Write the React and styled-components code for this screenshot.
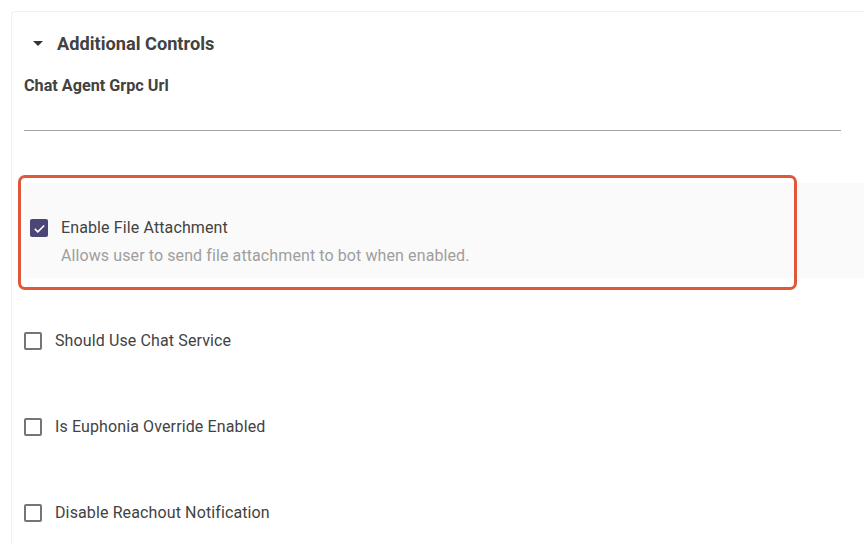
import React from 'react';
import styled, { createGlobalStyle } from 'styled-components';

const GlobalStyle = createGlobalStyle`
  html, body {
    margin: 0;
    padding: 0;
    background: #ffffff;
    overflow: hidden;
  }
  body {
    font-family: Roboto, "Liberation Sans", Arial, sans-serif;
    color: #424242;
  }
`;

const Page = styled.div`
  padding: 11px 0 0 11px;
  width: 940px;
`;

const Card = styled.div`
  border-top: 1px solid #f1f1f1;
  border-left: 1px solid #f1f1f1;
  border-top-left-radius: 4px;
  padding: 0 0 0 12px;
  min-height: 560px;
`;

const Header = styled.div`
  display: flex;
  align-items: center;
  height: 62px;
  padding-left: 2px;
  gap: 7px;
`;

const Caret = styled.svg`
  width: 24px;
  height: 24px;
  fill: #333;
`;

const Title = styled.h2`
  margin: 0;
  font-size: 18.2px;
  font-weight: 700;
  color: #424242;
`;

const FieldLabel = styled.div`
  font-size: 16.2px;
  font-weight: 700;
  color: #424242;
  line-height: 20px;
  margin-top: 2px;
`;

const Underline = styled.div`
  width: 817px;
  height: 26px;
  border-bottom: 1px solid #a3a3a3;
  margin-top: 8px;
`;

const Options = styled.div`
  display: flex;
  flex-direction: column;
  margin-top: 52px;
`;

const HighlightRow = styled.div`
  position: relative;
  background: #fafafa;
  height: 95px;
  box-sizing: border-box;
  padding: 36px 0 0 6px;
  margin-bottom: 20px;
`;

const Annotation = styled.div`
  position: absolute;
  left: -6px;
  top: -8px;
  width: 779px;
  height: 115px;
  box-sizing: border-box;
  border: 3px solid #e0573a;
  border-radius: 7px;
  pointer-events: none;
`;

const Row = styled.label`
  display: flex;
  align-items: center;
  gap: 13px;
  height: ${p => (p.$tall ? '86px' : '18px')};
`;

const Box = styled.span`
  width: 18px;
  height: 18px;
  box-sizing: border-box;
  border-radius: 2px;
  flex: none;
  display: flex;
  align-items: center;
  justify-content: center;
  background: ${p => (p.$checked ? '#4a4675' : 'transparent')};
  border: ${p => (p.$checked ? 'none' : '2px solid #757575')};
`;

const Check = styled.svg`
  width: 15px;
  height: 15px;
  fill: none;
  stroke: #ffffff;
  stroke-width: 2.6;
`;

const LabelText = styled.span`
  font-size: 16px;
  letter-spacing: 0.12px;
  color: #424242;
  line-height: 20px;
`;

const Hint = styled.div`
  font-size: 16px;
  letter-spacing: 0.1px;
  color: #9e9e9e;
  line-height: 20px;
  margin: 9px 0 0 31px;
`;

const Checkbox = ({ checked }) => (
  <Box $checked={checked}>
    {checked && (
      <Check viewBox="0 0 24 24">
        <path d="M4.5 12.5l4.8 4.8L19.5 7.2" />
      </Check>
    )}
  </Box>
);

const options = [
  'Should Use Chat Service',
  'Is Euphonia Override Enabled',
  'Disable Reachout Notification',
];

export default function App() {
  return (
    <>
      <GlobalStyle />
      <Page>
        <Card>
          <Header>
            <Caret viewBox="0 0 24 24">
              <path d="M7 10l5 5 5-5z" />
            </Caret>
            <Title>Additional Controls</Title>
          </Header>
          <FieldLabel>Chat Agent Grpc Url</FieldLabel>
          <Underline />
          <Options>
            <HighlightRow>
              <Row>
                <Checkbox checked />
                <LabelText>Enable File Attachment</LabelText>
              </Row>
              <Hint>Allows user to send file attachment to bot when enabled.</Hint>
              <Annotation />
            </HighlightRow>
            {options.map(o => (
              <Row key={o} $tall>
                <Checkbox />
                <LabelText>{o}</LabelText>
              </Row>
            ))}
          </Options>
        </Card>
      </Page>
    </>
  );
}
